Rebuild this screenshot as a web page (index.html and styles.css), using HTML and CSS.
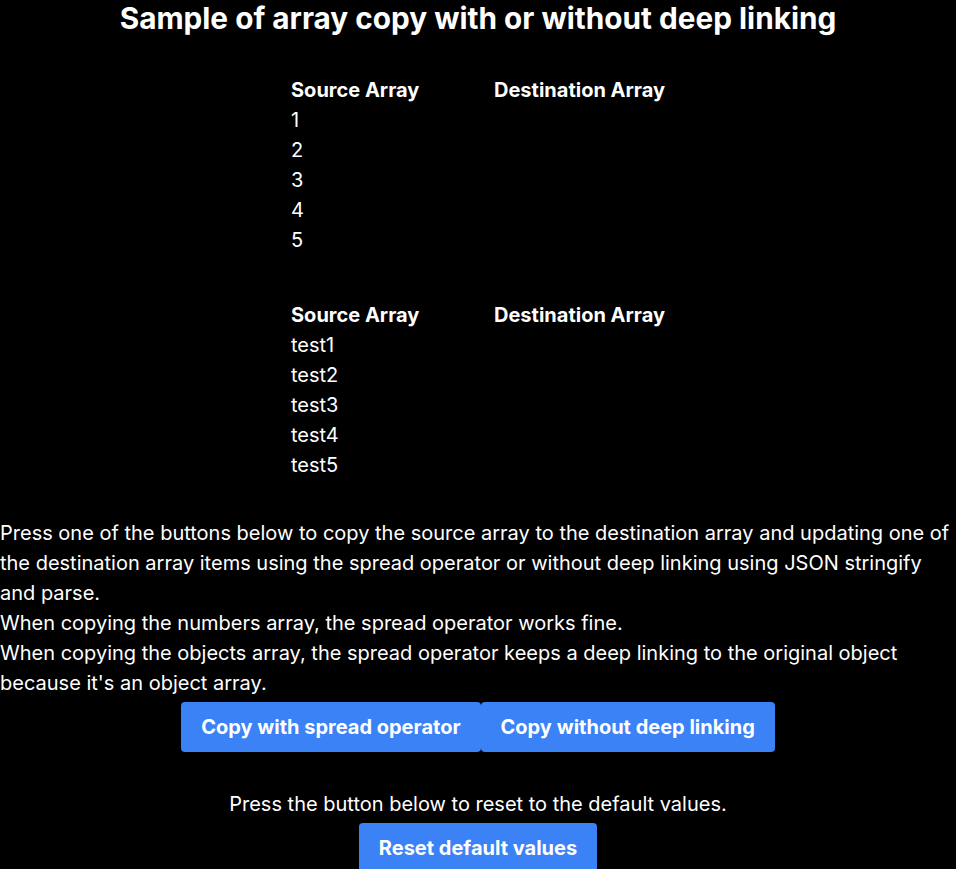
FILE: index.html
```html
<!DOCTYPE html>
<html lang="en">
<head>
<meta charset="utf-8">
<title>Array copy sample</title>
<link rel="stylesheet" href="styles.css">
</head>
<body>
<h1 class="title">Sample of array copy with or without deep linking</h1>

<table class="arr arr-first">
  <thead>
    <tr><th class="col-src">Source Array</th><th class="col-dst">Destination Array</th></tr>
  </thead>
  <tbody>
    <tr><td>1</td><td></td></tr>
    <tr><td>2</td><td></td></tr>
    <tr><td>3</td><td></td></tr>
    <tr><td>4</td><td></td></tr>
    <tr><td>5</td><td></td></tr>
  </tbody>
</table>

<table class="arr arr-second">
  <thead>
    <tr><th class="col-src">Source Array</th><th class="col-dst">Destination Array</th></tr>
  </thead>
  <tbody>
    <tr><td>test1</td><td></td></tr>
    <tr><td>test2</td><td></td></tr>
    <tr><td>test3</td><td></td></tr>
    <tr><td>test4</td><td></td></tr>
    <tr><td>test5</td><td></td></tr>
  </tbody>
</table>

<p class="desc">Press one of the buttons below to copy the source array to the destination array and updating one of the destination array items using the spread operator or without deep linking using JSON stringify and parse.<br>When copying the numbers array, the spread operator works fine.<br>When copying the objects array, the spread operator keeps a deep linking to the original object because it's an object array.</p>

<div class="btn-row">
  <button class="btn">Copy with spread operator</button>
  <button class="btn">Copy without deep linking</button>
</div>

<p class="reset-note">Press the button below to reset to the default values.</p>
<div class="btn-row reset-row">
  <button class="btn">Reset default values</button>
</div>
</body>
</html>
```

FILE: styles.css
```css
html, body {
  background: #000;
}
body {
  margin: 0;
  color: #fff;
  font-family: Inter, "Noto Sans", sans-serif;
  font-size: 20px;
  line-height: 30px;
}
.title {
  margin: 0;
  font-size: 29.75px;
  line-height: 36px;
  font-weight: 700;
  text-align: center;
}
.arr {
  border-collapse: collapse;
  margin: 0 auto;
}
.arr th, .arr td {
  padding: 0;
  text-align: left;
  vertical-align: top;
  height: 30px;
}
.arr th {
  font-weight: 700;
}
.col-src {
  width: 203px;
}
.arr-first {
  margin-top: 39px;
}
.arr-second {
  margin-top: 45px;
}
.desc {
  margin: 38px 0 0;
}
.btn-row {
  display: flex;
  justify-content: center;
  margin-top: 4px;
}
.btn {
  font-family: inherit;
  font-size: 20px;
  font-weight: 700;
  line-height: 30px;
  color: #fff;
  background: #3b82f6;
  border: none;
  border-radius: 4px;
  padding: 10px 20px;
  cursor: pointer;
}
.reset-note {
  margin: 37px 0 0;
  text-align: center;
}
.reset-row {
  margin-top: 4px;
}
```
